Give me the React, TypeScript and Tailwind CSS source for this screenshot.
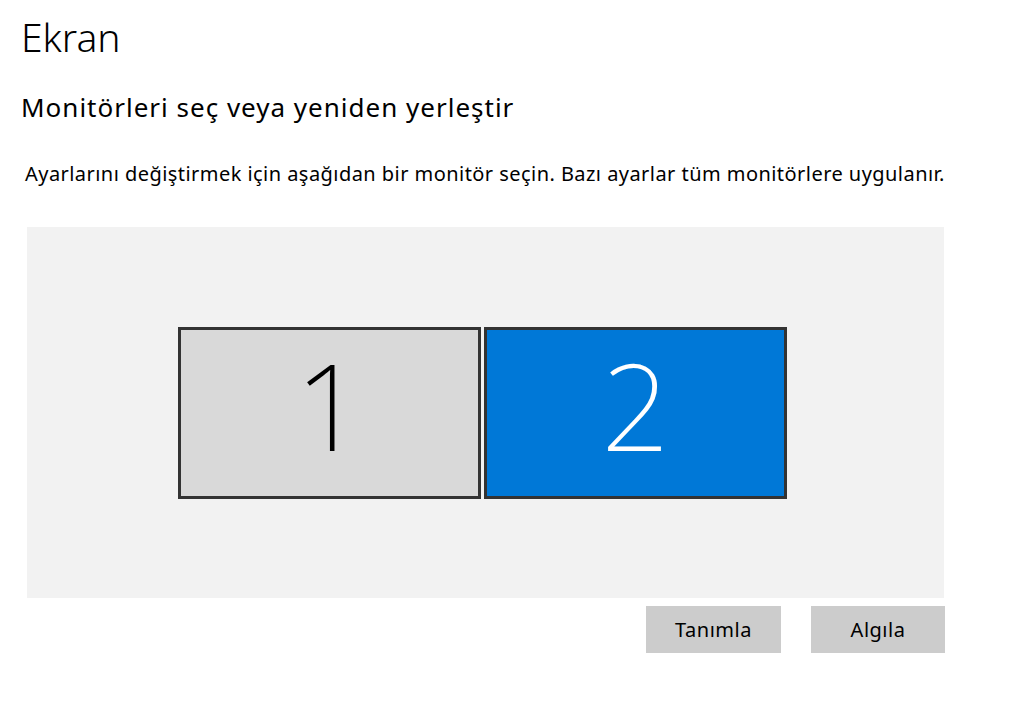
import React from 'react';

const font = { fontFamily: '"Noto Sans", "Open Sans", sans-serif' };

function Monitor({ n, active }: { n: number; active?: boolean }) {
    return (
        <div
            className={
                active
                    ? 'w-[303px] h-[172px] border-[3px] border-[#333333] bg-[#0078d7] text-white flex items-center justify-center'
                    : 'w-[303px] h-[172px] border-[3px] border-[#333333] bg-[#d9d9d9] text-black flex items-center justify-center'
            }
        >
            <span className="text-[120px] font-extralight leading-none pb-[16px]">{n}</span>
        </div>
    );
}

export default function App() {
    return (
        <div className="w-[1020px] h-[705px] bg-white text-black overflow-hidden" style={font}>
            <div className="pl-[21px] pt-[11px]">
                <h1 className="text-[39px] font-light leading-[52px]">Ekran</h1>
                <h2 className="mt-[27px] text-[26px] leading-[34px] tracking-[1px]">
                    Monitörleri seç veya yeniden yerleştir
                </h2>
                <p className="mt-[37px] ml-[4px] text-[20px] leading-[26px] tracking-[0.45px]">
                    Ayarlarını değiştirmek için aşağıdan bir monitör seçin. Bazı ayarlar tüm monitörlere uygulanır.
                </p>
            </div>

            <div className="ml-[27px] mt-[40px] w-[917px] h-[371px] bg-[#f2f2f2] flex items-center justify-center gap-[3px] pr-[6px]">
                <Monitor n={1} />
                <Monitor n={2} active />
            </div>

            <div className="mt-[8px] w-[945px] flex justify-end gap-[30px]">
                <button className="w-[135px] h-[47px] bg-[#cccccc] text-[20px] tracking-[0.5px] text-black">Tanımla</button>
                <button className="w-[134px] h-[47px] bg-[#cccccc] text-[20px] tracking-[0.5px] text-black">Algıla</button>
            </div>
        </div>
    );
}
